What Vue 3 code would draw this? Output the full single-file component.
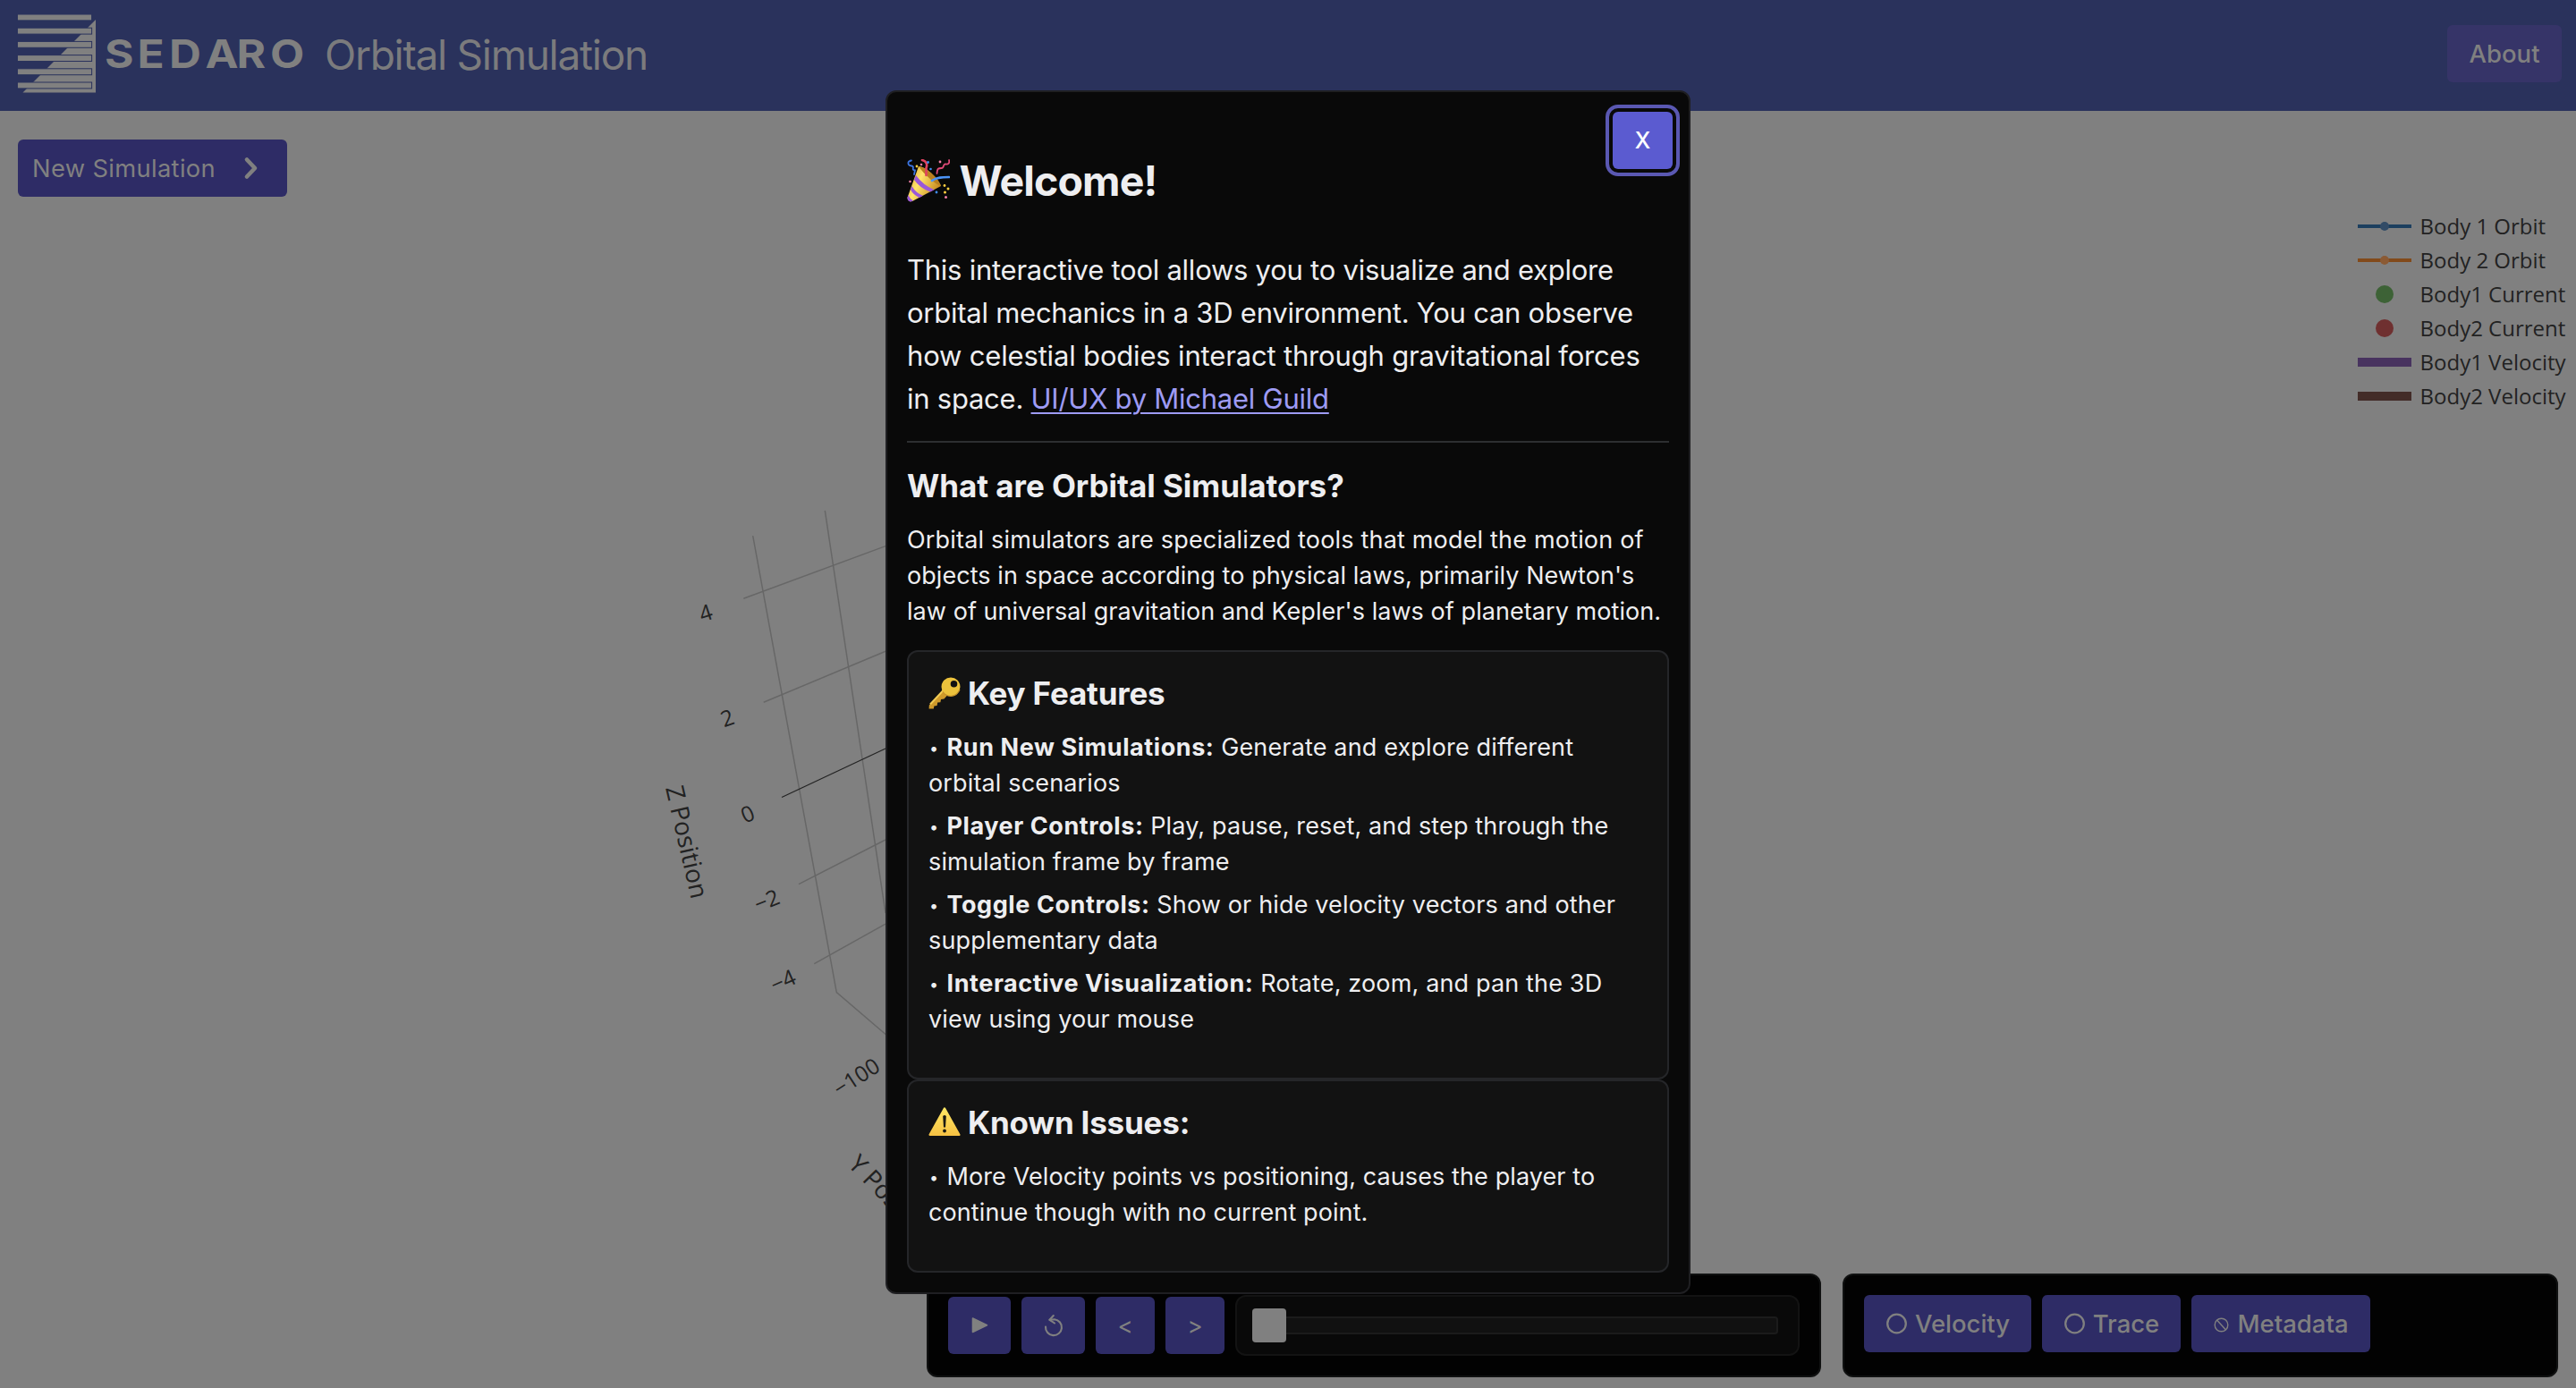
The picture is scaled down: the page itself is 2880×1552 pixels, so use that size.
<script setup>
const legend = [
  { name: 'Body 1 Orbit', kind: 'line', color: '#1c3f5f', dot: '#324b66' },
  { name: 'Body 2 Orbit', kind: 'line', color: '#824a1b', dot: '#8b5a34' },
  { name: 'Body1 Current', kind: 'dot', color: '#3d6236' },
  { name: 'Body2 Current', kind: 'dot', color: '#6f3030' },
  { name: 'Body1 Velocity', kind: 'bar', color: '#48335f' },
  { name: 'Body2 Velocity', kind: 'bar', color: '#432c28' }
]

const gridLines = [
  'M841.7 599.1L935.3 1109.6L1000 1165',
  'M922.3 570.9L990 1021',
  'M831.3 669.2L990 610.6',
  'M853.7 785.3L990 728.3',
  'M893 988.7L990 939',
  'M910.3 1077.7L990 1033.2'
]

const ticks = [
  { text: '4', x: 789, y: 685.4, angle: -18 },
  { text: '2', x: 813.2, y: 803, angle: -20 },
  { text: '0', x: 836, y: 910.3, angle: -24 },
  { text: '−2', x: 857.3, y: 1007, angle: -22 },
  { text: '−4', x: 875.5, y: 1097, angle: -24 },
  { text: '−100', x: 957.7, y: 1204.5, angle: -33 }
]

const features = [
  { title: 'Run New Simulations:', rest: 'Generate and explore different', tail: 'orbital scenarios' },
  { title: 'Player Controls:', rest: 'Play, pause, reset, and step through the', tail: 'simulation frame by frame' },
  { title: 'Toggle Controls:', rest: 'Show or hide velocity vectors and other', tail: 'supplementary data' },
  { title: 'Interactive Visualization:', rest: 'Rotate, zoom, and pan the 3D', tail: 'view using your mouse' }
]

const bars = [0, 1, 2, 3, 4, 5]
const letters = '103.5 135.8 167.3 203.1 234.1 267.3'
</script>

<template>
  <div class="page">
    <header class="header">
      <svg class="logo" width="346" height="124" viewBox="0 0 346 124">
        <path d="M107 22V103.5H25.5Z" fill="#808080" />
        <rect
          v-for="i in bars" :key="i" x="19.4" :y="16 + i * 15.2" width="83.2" height="6.9"
          fill="#808080" stroke="#2a325c" stroke-width="1"
        />
        <text :x="letters" y="76" transform="scale(1.13 1)" class="wordmark">SEDARO</text>
      </svg>
      <h1 class="app-title">Orbital Simulation</h1>
      <button class="about">About</button>
    </header>

    <main class="main">
      <svg class="plot" width="1100" height="1428" viewBox="0 124 1100 1428">
        <g fill="none" stroke="#676767" stroke-width="1.5">
          <path v-for="d in gridLines" :key="d" :d="d" />
        </g>
        <path d="M874 891.5L990 837" stroke="#222" stroke-width="1.2" />
        <text
          v-for="t in ticks" :key="t.text" class="tick" y="8.5"
          :transform="`translate(${t.x} ${t.y}) rotate(${t.angle})`"
        >{{ t.text }}</text>
        <text class="axis" transform="translate(744 881) rotate(77)">Z Position</text>
        <text class="axis" transform="translate(947 1303) rotate(46)">Y Position</text>
      </svg>

      <div class="top-row">
        <button class="new-sim">
          <span>New Simulation</span>
          <svg width="18" height="26" viewBox="0 0 18 26">
            <path d="M4 3.5L13 13L4 22.5" fill="none" stroke="#808080" stroke-width="4.6" stroke-linecap="round" stroke-linejoin="round" />
          </svg>
        </button>
        <ul class="legend">
          <li v-for="l in legend" :key="l.name">
            <svg width="60" height="38" viewBox="0 0 60 38">
              <rect v-if="l.kind === 'line'" y="17" width="60" height="4" :fill="l.color" />
              <circle v-if="l.kind === 'line'" cx="30" cy="19" r="5" :fill="l.dot" />
              <circle v-if="l.kind === 'dot'" cx="30" cy="19" r="10" :fill="l.color" />
              <rect v-if="l.kind === 'bar'" y="14" width="60" height="10" :fill="l.color" />
            </svg>
            <span>{{ l.name }}</span>
          </li>
        </ul>
      </div>

      <div class="bottom-row">
        <section class="panel player">
          <button class="ctl w70">
            <svg width="20" height="20" viewBox="0 0 20 20"><path d="M2.500 2L18.500 9.700L2.500 17.500Z" fill="#808080" stroke="#808080" stroke-width="1.6" stroke-linejoin="round" /></svg>
          </button>
          <button class="ctl w71">
            <svg width="22" height="26" viewBox="0 0 22 26">
              <g fill="none" stroke="#808080" stroke-width="2.1" stroke-linecap="round" stroke-linejoin="round">
                <path d="M2 14.5A9 9 0 1 0 12 6.200L6.500 6.800" />
                <path d="M10.8 2L6.5 6.8L12 10.5" />
              </g>
            </svg>
          </button>
          <button class="ctl w66">&lt;</button>
          <button class="ctl w66">&gt;</button>
          <div class="slider">
            <div class="thumb"></div>
            <div class="track"></div>
          </div>
        </section>

        <section class="panel toggles">
          <button class="toggle t1">
            <svg width="24" height="26" viewBox="0 0 24 26"><circle cx="12.500" cy="13" r="10.300" fill="none" stroke="#808080" stroke-width="2.3" /></svg>
            <span>Velocity</span>
          </button>
          <button class="toggle t2">
            <svg width="24" height="26" viewBox="0 0 24 26"><circle cx="12.500" cy="13" r="10.300" fill="none" stroke="#808080" stroke-width="2.3" /></svg>
            <span>Trace</span>
          </button>
          <button class="toggle t3">
            <svg width="18" height="26" viewBox="0 0 18 26"><g fill="none" stroke="#808080" stroke-width="1.4"><circle cx="9.500" cy="14.5" r="7.3" /><path d="M4.500 9L14.500 20" /></g></svg>
            <span>Metadata</span>
          </button>
        </section>
      </div>
    </main>

    <div class="modal">
      <button class="close">X</button>
      <h2 class="welcome">
        <svg width="48" height="48" viewBox="0 0 48 48">
          <defs>
            <linearGradient id="cone" x1="0" x2="1" y1="0" y2="0.5">
              <stop offset="0" stop-color="#d79a28" /><stop offset=".45" stop-color="#ffe46a" /><stop offset="1" stop-color="#c78a1f" />
            </linearGradient>
          </defs>
          <path d="M13 8C20 8 34 20 38 30L6 47Q1 48 .5 43Z" fill="url(#cone)" />
          <path d="M13 8C20 8 35 20 38 30C32 28 20 18 13 8Z" fill="#b9811f" />
          <path d="M10 18Q18 29 30.500 34.200L26 36.600Q14 32 8 23ZM5.500 30Q10 38 18 40.800L14 43Q7 40 4 34ZM1.500 40Q3 44 7 46.500L4 47.600Q0 47 .6 42.500Z" fill="#9a58d8" />
          <g fill="none" stroke-linecap="round" stroke-width="2.2">
            <path d="M5 1.500C0 2 .5 7 5 7.500S4 12 9 12.500L8 17" stroke="#3b74e0" stroke-width="1.800" />
            <path d="M17 1C22 2 23 6 21.500 10V18" stroke="#e04260" stroke-width="2.600" />
            <path d="M47 1C48 5 46 6 43 5.500S42 10 38.500 10S34 10 33.500 16" stroke="#e04a78" stroke-width="1.800" />
            <path d="M28 24C33 20 40 20 47 20" stroke="#4b93f5" stroke-width="2.600" />
          </g>
          <g fill="#ffcf3f"><circle cx="11" cy="8" r="1.400" /><circle cx="42" cy="29.500" r="1.400" /><circle cx="46" cy="33" r="1.500" /><circle cx="42.500" cy="37" r="1.500" /></g>
          <g fill="#f27fa8"><circle cx="16" cy="6" r="1.300" /><circle cx="37" cy="3" r="1.400" /><circle cx="43.500" cy="42.500" r="1.500" /><circle cx="3.500" cy="25" r="1.300" /></g>
          <g fill="#3f8cf2"><circle cx="23.500" cy="3.500" r="1.400" /><circle cx="26.500" cy="11" r="1.300" /><circle cx="33" cy="37" r="1.400" /></g>
        </svg>
        <span>Welcome!</span>
      </h2>
      <p class="intro">
        This interactive tool allows you to visualize and explore<br>
        orbital mechanics in a 3D environment. You can observe<br>
        <span class="loose">how celestial bodies interact through gravitational forces</span><br>
        in space. <a>UI/UX by Michael Guild</a>
      </p>
      <div class="divider"></div>
      <h3 class="question">What are Orbital Simulators?</h3>
      <p class="body">
        <span class="loose">Orbital simulators are specialized tools that model the motion of</span><br>
        objects in space according to physical laws, primarily Newton's<br>
        law of universal gravitation and Kepler's laws of planetary motion.
      </p>

      <section class="card">
        <h3>
          <svg width="36" height="36" viewBox="0 0 36 36">
            <path d="M17 15L.8 31.500L.6 35.500H5.800L6.400 32.500L9.600 32L10.200 28.600L13.400 28.300L14 25L17.500 24.500L22 19.500Z" fill="#cf9a2b" />
            <path d="M17 14.500L2 30.500" stroke="#f3cd55" stroke-width="2" />
            <path d="M25 .5A10.500 10.500 0 1 1 25 21.500A10.500 10.500 0 1 1 25 .5ZM28.500 4A3.800 3.800 0 1 0 28.500 11.600A3.800 3.800 0 1 0 28.500 4Z" fill="#ecc23c" fill-rule="evenodd" />
            <path d="M16 16.500Q19 21.500 25.500 21.300Q32 21 35 14" fill="none" stroke="#c4912a" stroke-width="1.300" />
          </svg>
          <span>Key Features</span>
        </h3>
        <ul>
          <li v-for="f in features" :key="f.title">
            <span class="bullet">•</span><strong>{{ f.title }}</strong> {{ f.rest }}<br>{{ f.tail }}
          </li>
        </ul>
      </section>

      <section class="card issues">
        <h3>
          <svg width="36" height="36" viewBox="0 0 36 36">
            <defs>
              <linearGradient id="warn" x1="0" x2="0" y1="0" y2="1">
                <stop offset="0" stop-color="#ffe763" /><stop offset="1" stop-color="#f6c244" />
              </linearGradient>
            </defs>
            <path d="M18 2.500L34.300 31.800H1.700Z" fill="url(#warn)" stroke="url(#warn)" stroke-width="2.500" stroke-linejoin="round" />
            <path d="M16.200 11Q18 9 19.800 11L19 23.500H17Z" fill="#1b1a12" />
            <circle cx="18" cy="27.500" r="1.900" fill="#1b1a12" />
          </svg>
          <span>Known Issues:</span>
        </h3>
        <ul>
          <li class="tight">
            <span class="bullet">•</span>More Velocity points vs positioning, causes the player to<br>continue though with no current point.
          </li>
        </ul>
      </section>
    </div>
  </div>
</template>

<style>
body {
  margin: 0;
  background: #808080;
}
</style>

<style scoped>
* {
  box-sizing: border-box;
}

h1, h2, h3, p, ul {
  margin: 0;
  padding: 0;
}

ul {
  list-style: none;
}

button {
  border: 0;
  padding: 0;
  margin: 0;
  font-family: inherit;
  color: #808080;
  background: #2e2c66;
  border-radius: 6px;
  display: flex;
  align-items: center;
  justify-content: center;
}

.page {
  position: relative;
  width: 2880px;
  height: 1552px;
  display: flex;
  flex-direction: column;
  background: #808080;
  font-family: Inter, "Liberation Sans", sans-serif;
  overflow: hidden;
}

.header {
  height: 124px;
  display: flex;
  align-items: center;
  background: #2a325c;
  padding-right: 16px;
}

.wordmark {
  font-size: 44px;
  font-weight: 700;
  fill: #808080;
}

.app-title {
  margin: -2px 0 0 17px;
  font-size: 46px;
  font-weight: 400;
  letter-spacing: -1.27px;
  color: #7b7b7d;
}

.about {
  margin-left: auto;
  width: 128px;
  height: 64px;
  margin-bottom: 4px;
  background: #363468;
  font-size: 27.5px;
  font-weight: 500;
}

.main {
  position: relative;
  flex: 1;
  display: flex;
  flex-direction: column;
  justify-content: space-between;
  padding: 32px 0 12px 20px;
}

.plot {
  position: absolute;
  left: 0;
  top: 0;
}

.tick,
.axis {
  font-family: "Open Sans", sans-serif;
  fill: #222;
}

.tick {
  font-size: 24.5px;
  text-anchor: middle;
}

.axis {
  font-size: 28px;
}

.top-row {
  display: flex;
  justify-content: space-between;
  align-items: flex-start;
}

.new-sim {
  position: relative;
  width: 301px;
  height: 64px;
  padding: 0 31px 0 16px;
  justify-content: space-between;
  font-size: 27.3px;
  letter-spacing: 0.35px;
}

.legend {
  width: 244px;
  padding-top: 78px;
}

.legend li {
  display: flex;
  height: 38px;
  align-items: center;
  gap: 9.5px;
  font: 24px/38px "Open Sans", sans-serif;
  color: #222;
  white-space: nowrap;
}

.bottom-row {
  position: relative;
  display: flex;
  gap: 24px;
  margin-left: 1016px;
}

.panel {
  height: 116px;
  display: flex;
  background: #020202;
  border: 2px solid #101111;
  border-radius: 12px;
}

.player {
  width: 1000px;
  padding: 22px;
}

.toggles {
  width: 800px;
  padding: 22px;
  gap: 12px;
}

.ctl {
  height: 64px;
  margin: 2px 12px 0 0;
  font-size: 26px;
  font-weight: 400;
}

.w70 { width: 70px; }
.w71 { width: 71px; }
.w66 { width: 66px; }

.slider {
  flex: 1;
  height: 68px;
  display: flex;
  align-items: center;
  padding: 0 22px 0 17px;
  background: #090909;
  border: 2px solid #131313;
  border-radius: 12px;
}

.thumb {
  width: 38px;
  height: 38px;
  border-radius: 4px;
  background: #808080;
}

.track {
  flex: 1;
  height: 20px;
  background: #111;
  border: 2px solid #1b1b1b;
  border-left: 0;
  border-radius: 0 4px 4px 0;
}

.toggle {
  height: 64px;
  font-size: 27.5px;
  font-weight: 500;
  gap: 9px;
}

.t1 { width: 187px; }
.t2 { width: 155px; }
.t3 { width: 200px; }

.modal {
  position: absolute;
  left: 990px;
  top: 101px;
  width: 900px;
  height: 1346px;
  padding: 63px 22px 0;
  background: #090909;
  border: 2px solid #1f1f22;
  border-radius: 12px;
  color: #eeeef0;
  white-space: nowrap;
}

.close {
  position: absolute;
  right: 18px;
  top: 22px;
  width: 67px;
  height: 64px;
  background: #5b5bd0;
  color: #fff;
  font-size: 25px;
  font-weight: 500;
  outline: 4px solid #5a58b2;
  outline-offset: 4px;
}

.welcome {
  display: flex;
  align-items: center;
  gap: 10.5px;
  height: 72px;
  font-size: 46.5px;
  font-weight: 700;
  letter-spacing: -0.9px;
}

.intro {
  margin-top: 40px;
  font-size: 31px;
  line-height: 48px;
  letter-spacing: -0.25px;
}

.intro .loose {
  letter-spacing: -0.17px;
}

.intro a {
  color: #9e9bf4;
  text-decoration: underline;
  text-decoration-thickness: 2px;
  text-underline-offset: 4px;
}

.divider {
  height: 2px;
  margin-top: 23px;
  background: #2d2f31;
}

.question {
  margin-top: 21px;
  font-size: 35px;
  line-height: 54px;
  font-weight: 700;
  letter-spacing: -0.05px;
}

.body {
  margin-top: 14px;
  font-size: 27px;
  line-height: 40px;
  letter-spacing: 0.06px;
}

.body .loose {
  letter-spacing: 0.18px;
}

.card {
  height: 480px;
  margin-top: 23px;
  padding: 19px 22px 0;
  background: #121212;
  border: 2px solid #252629;
  border-radius: 12px;
}

.issues {
  height: 216px;
  margin-top: 0;
}

.card h3 {
  display: flex;
  align-items: center;
  gap: 8px;
  height: 54px;
  margin-bottom: 14px;
  font-size: 35px;
  font-weight: 700;
  letter-spacing: -0.2px;
}

.card li {
  margin-bottom: 8px;
  font-size: 27px;
  line-height: 40px;
  letter-spacing: 0.15px;
}

.card .tight {
  letter-spacing: 0.1px;
}

.card strong {
  font-weight: 700;
  letter-spacing: 0.57px;
}

.bullet {
  display: inline-block;
  width: 20.5px;
  padding-left: 1px;
  font-size: 18px;
  line-height: 20px;
  vertical-align: 2px;
}
</style>
